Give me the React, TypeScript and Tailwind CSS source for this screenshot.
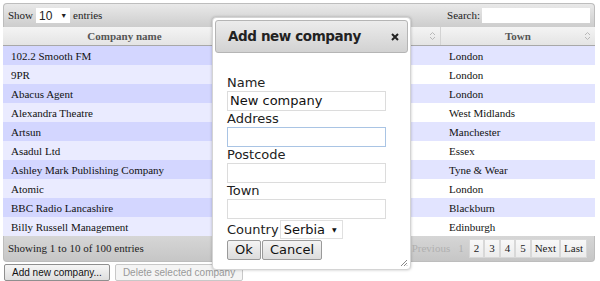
import React from "react";

const rows: [string, string][] = [
  ["102.2 Smooth FM", "London"],
  ["9PR", "London"],
  ["Abacus Agent", "London"],
  ["Alexandra Theatre", "West Midlands"],
  ["Artsun", "Manchester"],
  ["Asadul Ltd", "Essex"],
  ["Ashley Mark Publishing Company", "Tyne & Wear"],
  ["Atomic", "London"],
  ["BBC Radio Lancashire", "Blackburn"],
  ["Billy Russell Management", "Edinburgh"],
];

const serif = { fontFamily: '"Liberation Serif", "Times New Roman", serif' };
const sans = { fontFamily: '"DejaVu Sans", Verdana, sans-serif' };
const arial = { fontFamily: '"Liberation Sans", Arial, sans-serif' };

function SortIcon() {
  return (
    <svg width="7" height="10" viewBox="0 0 7 10" className="shrink-0">
      <path d="M1 4 L3.5 1.5 L6 4" fill="none" stroke="#b8b8b8" strokeWidth="1" />
      <path d="M1 6 L3.5 8.5 L6 6" fill="none" stroke="#b8b8b8" strokeWidth="1" />
    </svg>
  );
}

function Field({ label, value, focus }: { label: string; value?: string; focus?: boolean }) {
  return (
    <div className="flex flex-col">
      <div className="h-[16px] text-[13px] leading-[16px] text-[#222]">{label}</div>
      <div
        className={`h-[20px] w-[159px] border bg-white px-[2px] text-[13px] leading-[18px] text-[#111] ${
          focus ? "border-[#a9c4e4]" : "border-[#dcdcdc]"
        }`}
      >
        {value}
      </div>
    </div>
  );
}

export default function App() {
  return (
    <div className="relative h-[281px] w-[600px] overflow-hidden bg-white">
      <div className="pl-[3px] pt-[3px]">
        <div className="w-[592px]">
          {/* Top toolbar */}
          <div
            className="flex h-[24px] items-center justify-between rounded-t-[4px] border border-b-0 border-[#bdbdbd] bg-gradient-to-b from-[#e9e9e9] to-[#cdcdcd] px-[4px] text-[11px] text-[#222]"
            style={serif}
          >
            <div className="flex items-center gap-[3px]">
              <span>Show</span>
              <div
                className="flex h-[15px] w-[34px] items-center justify-between bg-white px-[3px] text-[12px]"
                style={arial}
              >
                <span>10</span>
                <span className="text-[7px] leading-none">▼</span>
              </div>
              <span>entries</span>
            </div>
            <div className="flex items-center gap-[2px]">
              <span>Search:</span>
              <div className="h-[15px] w-[108px] bg-white" />
            </div>
          </div>
          {/* Header */}
          <div
            className="flex h-[19px] border-b border-[#a8a8a8] bg-gradient-to-b from-[#f4f4f4] to-[#e4e4e4] text-[11px] font-bold text-[#555]"
            style={serif}
          >
            <div className="flex w-[244px] items-center justify-center border-r border-[#d3d3d3]">Company name</div>
            <div className="flex w-[194px] items-center justify-end border-r border-[#d3d3d3] pr-[4px]">
              <SortIcon />
            </div>
            <div className="relative flex flex-1 items-center justify-center">
              Town
              <div className="absolute right-[4px] top-[4px]">
                <SortIcon />
              </div>
            </div>
          </div>
          {/* Rows */}
          <div className="text-[11px] text-[#111]" style={serif}>
            {rows.map(([c, t], i) => (
              <div key={c} className="flex h-[19px]">
                <div className={`flex w-[244px] items-center pl-[8px] pt-[2px] ${i % 2 === 0 ? "bg-[#d3d6ff]" : "bg-[#eaebff]"}`}>
                  {c}
                </div>
                <div className={`w-[194px] ${i % 2 === 0 ? "bg-[#e2e4ff]" : "bg-white"}`} />
                <div className={`flex flex-1 items-center pl-[8px] pt-[2px] ${i % 2 === 0 ? "bg-[#e2e4ff]" : "bg-white"}`}>
                  {t}
                </div>
              </div>
            ))}
          </div>
          {/* Footer */}
          <div
            className="flex h-[26px] items-center justify-between rounded-b-[4px] border border-t-0 border-[#bdbdbd] bg-gradient-to-b from-[#d6d6d6] to-[#c6c6c6] pl-[4px] pr-[7px] text-[11px] text-[#222]"
            style={serif}
          >
            <span>Showing 1 to 10 of 100 entries</span>
            <div className="flex h-[19px] items-stretch text-[11px]">
              <span className="flex items-center px-[4px] text-[#b0b0b0]">Previous</span>
              <span className="mr-[1px] flex items-center px-[4px] text-[#b0b0b0]">1</span>
              {["2", "3", "4", "5", "Next", "Last"].map((p) => (
                <span
                  key={p}
                  className={`flex items-center border border-[#d8d8d8] bg-gradient-to-b from-[#f8f8f8] to-[#ececec] text-[#222] ${
                    p.length > 1 ? "px-[3px]" : "px-[4px]"
                  }`}
                >
                  {p}
                </span>
              ))}
            </div>
          </div>
        </div>
        {/* Bottom buttons */}
        <div className="mt-[2px] flex gap-[5px] pl-[1px]" style={arial}>
          <div className="flex h-[17px] items-center rounded-[2px] border border-[#8f8f8f] bg-gradient-to-b from-[#f6f6f6] to-[#dedede] px-[7px] text-[10px] text-[#111]">
            Add new company...
          </div>
          <div className="flex h-[17px] items-center rounded-[2px] border border-[#c8c8c8] bg-[#f4f4f4] px-[7px] text-[10px] text-[#999]">
            Delete selected company
          </div>
        </div>
      </div>

      {/* Dialog */}
      <div
        className="absolute left-[212px] top-[17px] flex h-[253px] w-[199px] flex-col rounded-[4px] border border-[#d4d4d4] bg-white p-[2px] shadow-[0_0_3px_rgba(0,0,0,0.25)]"
        style={sans}
      >
        <div className="flex h-[33px] items-center justify-between rounded-[3px] border border-[#b5b5b5] bg-gradient-to-b from-[#ececec] to-[#d2d2d2] pl-[12px] pr-[8px]">
          <span className="text-[13.5px] font-bold tracking-[-0.4px] text-[#222]">Add new company</span>
          <svg width="8" height="8" viewBox="0 0 8 8">
            <path d="M1 1 L7 7 M7 1 L1 7" stroke="#222" strokeWidth="2" />
          </svg>
        </div>
        <div className="flex flex-col pl-[12px] pt-[22px]">
          <Field label="Name" value="New company" />
          <Field label="Address" focus />
          <Field label="Postcode" />
          <Field label="Town" />
          <div className="flex h-[21px] items-center">
            <span className="text-[13px] text-[#222]">Country</span>
            <div className="ml-[1px] flex h-[19px] w-[63px] items-center justify-between border border-[#e0e0e0] bg-white pl-[3px] pr-[5px] text-[13px] text-[#111]">
              <span>Serbia</span>
              <span className="text-[6px] leading-none">▼</span>
            </div>
          </div>
          <div className="flex gap-[1px]">
            <div className="flex h-[20px] w-[34px] items-center justify-center rounded-[2px] border border-[#9a9a9a] bg-gradient-to-b from-[#f4f4f4] to-[#dcdcdc] text-[13px] text-[#111]">
              Ok
            </div>
            <div className="flex h-[20px] w-[60px] items-center justify-center rounded-[2px] border border-[#9a9a9a] bg-gradient-to-b from-[#f4f4f4] to-[#dcdcdc] text-[13px] text-[#111]">
              Cancel
            </div>
          </div>
        </div>
        <svg className="absolute bottom-[2px] right-[2px]" width="9" height="9" viewBox="0 0 9 9">
          <path d="M8 2 L2 8 M8 5 L5 8 M8 7.5 L7.5 8" stroke="#888" strokeWidth="1" />
        </svg>
      </div>
    </div>
  );
}
